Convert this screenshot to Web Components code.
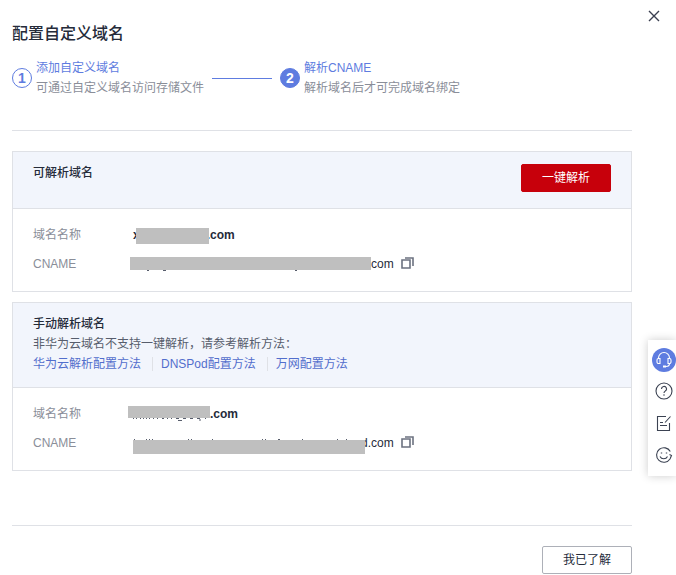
<!DOCTYPE html>
<html lang="zh-CN">
<head>
<meta charset="utf-8">
<title>配置自定义域名</title>
<style>
body{margin:0;background:#fff;color:#252b3a;font:12px/20px "Liberation Sans","Noto Sans CJK SC",sans-serif}
a{color:#526ecc;text-decoration:none}
</style>
</head>
<body>
<domain-dialog heading="配置自定义域名">
  <step-item slot="steps" number="1" label="添加自定义域名">可通过自定义域名访问存储文件</step-item>
  <step-line slot="steps"></step-line>
  <step-item slot="steps" number="2" label="解析CNAME" current>解析域名后才可完成域名绑定</step-item>

  <domain-card heading="可解析域名">
    <action-button slot="action" primary>一键解析</action-button>
    <info-row label="域名名称" strong>x<masked-text kind="name"></masked-text>.com</info-row>
    <info-row label="CNAME" copy><masked-text kind="cname"></masked-text>com</info-row>
  </domain-card>

  <domain-card heading="手动解析域名">
    <span slot="note">非华为云域名不支持一键解析，请参考解析方法：</span>
    <link-list slot="note"><a href="#huawei">华为云解析配置方法</a><a href="#dnspod">DNSPod配置方法</a><a href="#wanwang">万网配置方法</a></link-list>
    <info-row label="域名名称" strong><masked-text kind="name2"></masked-text>.com</info-row>
    <info-row label="CNAME" copy><masked-text kind="cname2"></masked-text>d.com</info-row>
  </domain-card>

  <action-button slot="footer">我已了解</action-button>
</domain-dialog>
<help-bar></help-bar>

<script>
const define = (name, html, setup) => customElements.define(name, class extends HTMLElement {
  connectedCallback() {
    if (this.shadowRoot) return;
    this.attachShadow({mode: "open"}).innerHTML = html;
    if (setup) setup(this, this.shadowRoot);
  }
});

define("domain-dialog", `<style>
:host{display:block;padding:22px 44px 0 12px}
h1{margin:0;font-size:16px;line-height:24px;font-weight:500}
header{display:flex;justify-content:space-between}
.close{position:absolute;top:8px;right:14px;width:16px;height:16px;padding:0;border:0;background:none;display:grid;place-items:center;cursor:pointer}
.steps{display:flex;align-items:center;gap:8px;margin-top:12px;padding-bottom:32px;border-bottom:1px solid #dfe1e6}
main{display:grid;gap:10px;margin-top:20px}
footer{display:flex;justify-content:flex-end;margin-top:54px;padding-top:20px;border-top:1px solid #dfe1e6}
</style>
<header><h1></h1><button class="close" aria-label="关闭"><svg width="12" height="12" viewBox="0 0 12 12" fill="none" stroke="#3a3f50" stroke-width="1.4"><path d="M1 1l10 10M11 1L1 11"/></svg></button></header>
<div class="steps"><slot name="steps"></slot></div>
<main><slot></slot></main>
<footer><slot name="footer"></slot></footer>`,
(el, root) => root.querySelector("h1").textContent = el.getAttribute("heading"));

define("step-item", `<style>
:host{display:flex;align-items:center;gap:4px;color:#8a8e99}
.num{box-sizing:border-box;width:20px;height:20px;border:1px solid #5e7ce0;border-radius:50%;color:#5e7ce0;font-size:14px;line-height:18px;font-weight:bold;text-align:center}
:host([current]) .num{background:#5e7ce0;color:#fff}
.label{color:#5e7ce0}
</style>
<span class="num"></span><div><div class="label"></div><slot></slot></div>`,
(el, root) => {
  root.querySelector(".num").textContent = el.getAttribute("number");
  root.querySelector(".label").textContent = el.getAttribute("label");
});

define("step-line", `<style>:host{display:block;width:60px;height:1px;background:#5e7ce0}</style>`);

define("domain-card", `<style>
:host{display:block;border:1px solid #dfe1e6}
header{display:flex;justify-content:space-between;align-items:flex-start;padding:11px 20px 13px;background:#f2f5fc;border-bottom:1px solid #dfe1e6}
h2{margin:0;font-size:12px;line-height:20px;font-weight:500}
.note{display:flex;flex-direction:column;color:#575d6c}
.body{display:grid;gap:9px;padding:16px 20px 17px}
</style>
<header><div><h2></h2><div class="note"><slot name="note"></slot></div></div><slot name="action"></slot></header>
<div class="body"><slot></slot></div>`,
(el, root) => root.querySelector("h2").textContent = el.getAttribute("heading"));

define("action-button", `<style>
:host{display:block}
:host([primary]){margin:1px 0 3px}
button{box-sizing:border-box;min-width:90px;height:28px;padding:0 19px;border:1px solid #adb0b8;border-radius:2px;background:#fff;color:#252b3a;font:inherit;line-height:20px;cursor:pointer}
:host([primary]) button{background:#c7000b;border-color:#c7000b;color:#fff}
</style><button><slot></slot></button>`);

define("link-list", `<style>
:host{display:flex}
::slotted(a:not(:first-child)){margin-left:11px;padding-left:9px;background:linear-gradient(#dfe1e6,#dfe1e6) left center/1px 14px no-repeat}
</style><slot></slot>`);

define("info-row", `<style>
:host{display:flex;align-items:center}
.label{flex:none;width:100px;color:#8a8e99}
.value{display:flex;align-items:center;height:20px}
:host([strong]) .value{font-weight:bold}
.copy{display:none;width:13px;height:15px;padding:0 0 2px;margin-left:7px;border:0;background:none;cursor:pointer}
:host([copy]) .copy{display:block}
svg{display:block}
</style>
<span class="label"></span><span class="value"><slot></slot></span>
<button class="copy" aria-label="复制"><svg width="13" height="13" viewBox="0 0 13 13" fill="none" stroke="#6c7280"><path d="M1 3h8v8H1z" stroke-width="1.6"/><path d="M4 1h8v8" stroke-width="1.6"/></svg></button>`,
(el, root) => root.querySelector(".label").textContent = el.getAttribute("label"));

const masks = {
  name:   {w: 73,  y: 3, h: 16, left: -4, right: -2, marks: ""},
  cname:  {w: 241, y: 3, h: 13, left: -3, right: 0, marks: "M17 16.5h2M33 16.5h3M165 16.5h2"},
  name2:  {w: 82,  y: 2, h: 12, left: -5, right: 0, marks: "M5 14.5h1M8 14.5h1M12 14.5h1M15 14.5h1M18 14.5h1M21 14.5h1M25 14.5h1M29 14.5h1M34 14.5h2M39 14.5h1M43 14.5h1M48 14.5h3M55 14.5h3M62 14.5h3M69 14.5h3M77 14.5h1M50 16.5h4M72 15v2"},
  cname2: {w: 232, y: 7, h: 14, left: 0, right: -4, marks: "M1.5 6v1M13 6.5h1M16 6.5h1M19 6.5h1M55.5 6v1M58.5 6v1M79.5 6v1M129.5 6v1M132.5 6v1M145 6.5h2M169.5 6v1M204 6.5h1M213.5 6v1"}
};
define("masked-text", `<style>
:host{display:block;height:20px;position:relative}
svg{display:block;overflow:visible}
</style>`, (el, root) => {
  const m = masks[el.getAttribute("kind")];
  el.style.marginLeft = m.left + "px";
  el.style.marginRight = m.right + "px";
  root.innerHTML += `<svg width="${m.w}" height="20" aria-hidden="true"><path d="${m.marks}" stroke="#575d6c"/><rect y="${m.y}" width="${m.w}" height="${m.h}" fill="#bfbfbf"/></svg>`;
});

define("help-bar", `<style>
:host{position:fixed;right:0;top:340px;display:flex;flex-direction:column;align-items:center;gap:10px;box-sizing:border-box;width:28px;padding:8px 0 10px 4px;background:#fff;box-shadow:0 0 10px rgba(0,0,0,.2)}
button{display:grid;place-items:center;width:24px;height:22px;padding:0;border:0;background:none;cursor:pointer}
.on{height:24px;border-radius:50%;background:#5e7ce0;margin-bottom:-2px}
svg{fill:none;stroke:#3b4252}
</style>
<button class="on" aria-label="客服"><svg width="18" height="18" viewBox="0 0 18 18" style="stroke:#fff" stroke-width="1.1"><path d="M3.500 7.500V7a5.500 5.500 0 0 1 11 0v.5"/><path d="M5 7.500v5H3.500a1.500 1.500 0 0 1-1.500-1.500V9a1.500 1.500 0 0 1 1.500-1.500zM13 7.500v5h1.500A1.500 1.500 0 0 0 16 11V9a1.500 1.500 0 0 0-1.500-1.500zM14.500 12.500c0 2-1.500 3-3.500 3"/><path d="M8 15.500h3" stroke-width="2"/></svg></button>
<button aria-label="帮助"><svg width="18" height="18" viewBox="0 0 18 18" stroke-width="1.1"><circle cx="9" cy="9" r="8"/><path d="M6.500 7a2.500 2.500 0 1 1 3.700 2.100C9.300 9.700 9 10 9 11M9 12.300v1.400"/></svg></button>
<button aria-label="反馈"><svg width="16" height="17" viewBox="0 0 16 17" stroke-width="1.1"><path d="M10 1.500H1.500v14h12V8M4 10.500h7M4 7.500h3M9 7.500l5.500-6"/></svg></button>
<button aria-label="评价"><svg width="18" height="18" viewBox="0 0 18 18" stroke-width="1.1"><path d="M15.300 5.500A7.300 7.300 0 1 0 15 13l1.500-3.500-2-1"/><path d="M5 10.500c1.500 3 6 3 7.500 0M5.800 7h1.400M10.800 7h1.400"/></svg></button>`);
</script>
</body>
</html>
